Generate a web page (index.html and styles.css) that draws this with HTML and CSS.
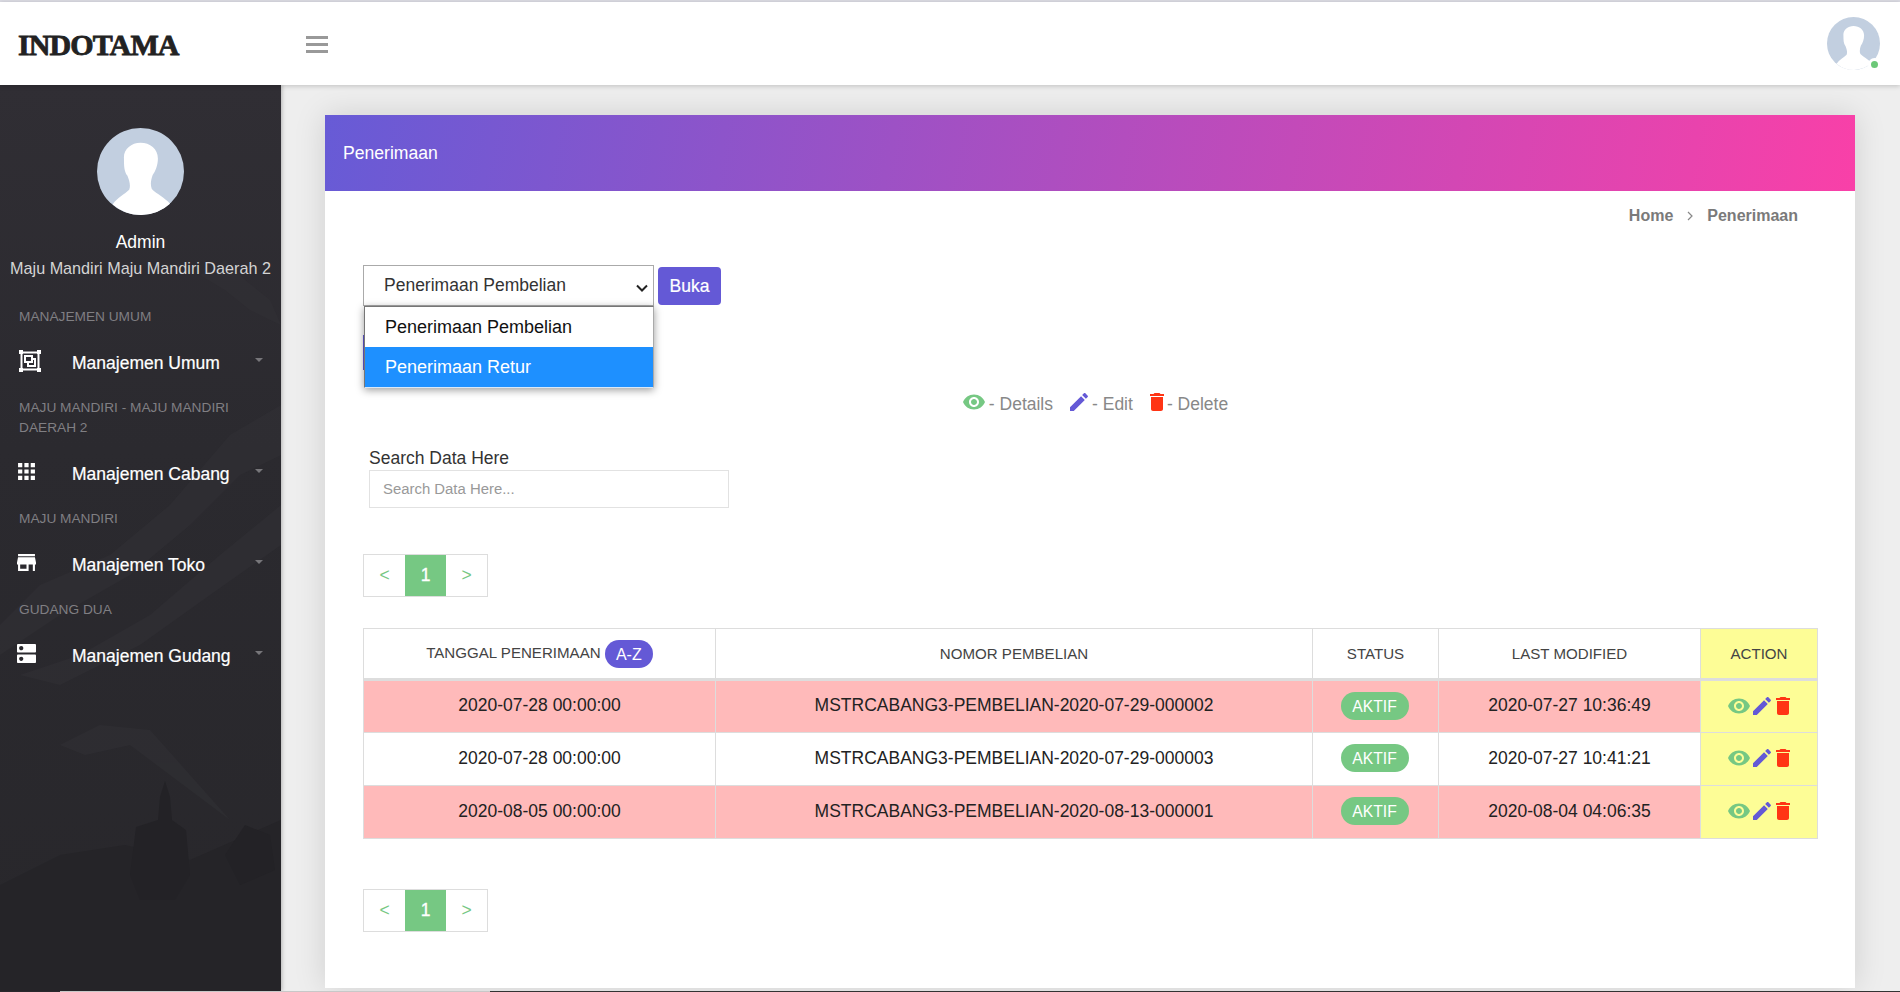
FILE: index.html
```html
<!DOCTYPE html>
<html lang="en">
<head>
    <meta charset="UTF-8">
    <meta name="viewport" content="width=device-width, initial-scale=1.0">
    <title>Penerimaan - Indotama</title>
    <link rel="stylesheet" href="styles.css">
</head>
<body>
    <svg class="icon-defs" width="0" height="0">
        <defs>
            <symbol id="i-eye" viewBox="0 0 24 24"><path d="M12 4.5C7 4.5 2.73 7.61 1 12c1.73 4.39 6 7.5 11 7.5s9.27-3.11 11-7.5c-1.73-4.39-6-7.5-11-7.5zM12 17c-2.76 0-5-2.24-5-5s2.24-5 5-5 5 2.24 5 5-2.24 5-5 5zm0-8c-1.66 0-3 1.34-3 3s1.34 3 3 3 3-1.34 3-3-1.34-3-3-3z"/></symbol>
            <symbol id="i-edit" viewBox="0 0 24 24"><path d="M3 17.25V21h3.75L17.81 9.94l-3.75-3.75L3 17.25zM20.71 7.04c.39-.39.39-1.02 0-1.41l-2.34-2.34c-.39-.39-1.02-.39-1.41 0l-1.83 1.83 3.75 3.75 1.83-1.83z"/></symbol>
            <symbol id="i-trash" viewBox="0 0 24 24"><path d="M6 19c0 1.1.9 2 2 2h8c1.1 0 2-.9 2-2V7H6v12zM19 4h-3.5l-1-1h-5l-1 1H5v2h14V4z"/></symbol>
            <symbol id="i-person" viewBox="0 0 100 100"><circle cx="50" cy="50" r="50" fill="#c2cfe0"/><path fill="#fff" d="M50 17C61 17 70 24 70 35C70 43 67 50 64 54C62 60 61 65 63 70C69 76 78 80 84 87A50 50 0 0 1 18 88C23 80 32 76 37 71C39 66 37 60 35 55C31 50 31 43 31 35C30 25 39 17 50 17Z"/></symbol>
        </defs>
    </svg>

    <div class="top-strip"></div>
    <header class="topbar">
        <div class="brand">INDOTAMA</div>
        <div class="burger"><span></span><span></span><span></span></div>
        <div class="top-avatar">
            <svg class="top-avatar-img"><use href="#i-person"/></svg>
            <span class="online-dot"></span>
        </div>
    </header>

    <div class="layout">
        <aside class="sidebar">
            <!-- faint mountain picture behind the menu -->
            <svg class="side-bg" viewBox="0 0 281 906" preserveAspectRatio="none">
                <g fill="#323136" opacity=".5">
                    <path d="M281 320L230 350L170 420L110 470L40 500L0 540V570L60 530L130 490L190 440L240 390L281 370Z"/>
                    <path d="M281 420L220 470L150 530L80 570L20 590L60 600L140 560L210 510L281 460Z"/>
                    <path d="M200 190L225 175L245 195L270 215L281 240L250 225L225 205Z"/>
                    <path d="M60 660L100 640L150 645L190 690L230 735L170 690L130 660L85 670Z"/>
                </g>
                <path fill="#252428" d="M0 800L60 770L125 760L190 775L281 735V906H0Z"/>
                <path fill="#232226" d="M130 790L136 742L158 735L160 712L165 696L170 712L172 735L186 745L190 790L175 815L140 815Z"/>
                <path fill="#232226" d="M225 770L245 740L270 750L275 785L240 800Z"/>
            </svg>
            <div class="profile">
                <svg class="profile-img"><use href="#i-person"/></svg>
                <div class="profile-name">Admin</div>
                <div class="profile-place">Maju Mandiri Maju Mandiri Daerah 2</div>
            </div>
            <div class="side-label first">MANAJEMEN UMUM</div>
            <a class="side-item">
                <svg class="side-icon side-icon-lg" viewBox="0 0 22 22" fill="none" stroke="#fff" stroke-width="2"><path d="M3 2.500h16M3 19.500h16M2.500 3v16M19.500 3v16"/><path d="M6 6h7v6H6z"/><path d="M9 12v4h7V9h-3"/><path fill="#fff" stroke="none" d="M0 0h4v4H0zM18 0h4v4h-4zM0 18h4v4H0zM18 18h4v4h-4z"/></svg>
                <span class="side-text">Manajemen Umum</span>
                <span class="caret"></span>
            </a>
            <div class="side-label">MAJU MANDIRI - MAJU MANDIRI DAERAH 2</div>
            <a class="side-item">
                <svg class="side-icon" viewBox="3 3 18 18" fill="#fff"><path d="M4 8h4V4H4v4zm6 12h4v-4h-4v4zm-6 0h4v-4H4v4zm0-6h4v-4H4v4zm6 0h4v-4h-4v4zm6-10v4h4V4h-4zm-6 4h4V4h-4v4zm6 6h4v-4h-4v4zm0 6h4v-4h-4v4z"/></svg>
                <span class="side-text">Manajemen Cabang</span>
                <span class="caret"></span>
            </a>
            <div class="side-label">MAJU MANDIRI</div>
            <a class="side-item">
                <svg class="side-icon" viewBox="3 3 18 18" fill="#fff"><path d="M20 4H4v2h16V4zm1 10v-2l-1-5H4l-1 5v2h1v6h10v-6h4v6h2v-6h1zm-9 4H6v-4h6v4z"/></svg>
                <span class="side-text">Manajemen Toko</span>
                <span class="caret"></span>
            </a>
            <div class="side-label">GUDANG DUA</div>
            <a class="side-item">
                <svg class="side-icon" viewBox="3 3 18 18" fill="#fff"><path d="M20 13H4c-.55 0-1 .45-1 1v6c0 .55.45 1 1 1h16c.55 0 1-.45 1-1v-6c0-.55-.45-1-1-1zM7 19c-1.100 0-2-.9-2-2s.9-2 2-2 2 .9 2 2-.9 2-2 2zM20 3H4c-.55 0-1 .45-1 1v6c0 .55.45 1 1 1h16c.55 0 1-.45 1-1V4c0-.55-.45-1-1-1zM7 9c-1.100 0-2-.9-2-2s.9-2 2-2 2 .9 2 2-.9 2-2 2z"/></svg>
                <span class="side-text">Manajemen Gudang</span>
                <span class="caret"></span>
            </a>
        </aside>

        <main class="main">
            <section class="card">
                <div class="card-head">Penerimaan</div>
                <div class="card-body">
                    <div class="crumbs">
                        <span>Home</span>
                        <svg class="crumb-sep" viewBox="0 0 10 10" fill="none" stroke="#888" stroke-width="1.200"><path d="M3 1l4 4-4 4"/></svg>
                        <span>Penerimaan</span>
                    </div>

                    <div class="picker">
                        <select class="picker-select">
                            <option>Penerimaan Pembelian</option>
                            <option>Penerimaan Retur</option>
                        </select>
                        <button class="btn-open">Buka</button>
                        <div class="picker-menu">
                            <div class="picker-option">Penerimaan Pembelian</div>
                            <div class="picker-option active">Penerimaan Retur</div>
                        </div>
                    </div>

                    <div class="btn-under"></div>

                    <div class="legend">
                        <svg class="ic green key-eye"><use href="#i-eye"/></svg><span>- Details</span>
                        <svg class="ic purple key-edit"><use href="#i-edit"/></svg><span>- Edit</span>
                        <svg class="ic red key-trash"><use href="#i-trash"/></svg><span>- Delete</span>
                    </div>

                    <div class="search">
                        <label class="search-label" for="searchData">Search Data Here</label>
                        <input class="search-input" id="searchData" placeholder="Search Data Here...">
                    </div>

                    <div class="pager pager-top">
                        <span class="pager-cell">&lt;</span>
                        <span class="pager-cell active">1</span>
                        <span class="pager-cell">&gt;</span>
                    </div>

                    <table class="data-table">
                        <thead>
                            <tr>
                                <th class="col-date">TANGGAL PENERIMAAN <span class="sort-pill">A-Z</span></th>
                                <th class="col-num">NOMOR PEMBELIAN</th>
                                <th class="col-status">STATUS</th>
                                <th class="col-mod">LAST MODIFIED</th>
                                <th class="col-action">ACTION</th>
                            </tr>
                        </thead>
                        <tbody>
                            <tr class="row-pink">
                                <td>2020-07-28 00:00:00</td>
                                <td>MSTRCABANG3-PEMBELIAN-2020-07-29-000002</td>
                                <td><span class="status-pill">AKTIF</span></td>
                                <td>2020-07-27 10:36:49</td>
                                <td class="col-action"><div class="actions"><svg class="ic green"><use href="#i-eye"/></svg><svg class="ic purple"><use href="#i-edit"/></svg><svg class="ic red"><use href="#i-trash"/></svg></div></td>
                            </tr>
                            <tr>
                                <td>2020-07-28 00:00:00</td>
                                <td>MSTRCABANG3-PEMBELIAN-2020-07-29-000003</td>
                                <td><span class="status-pill">AKTIF</span></td>
                                <td>2020-07-27 10:41:21</td>
                                <td class="col-action"><div class="actions"><svg class="ic green"><use href="#i-eye"/></svg><svg class="ic purple"><use href="#i-edit"/></svg><svg class="ic red"><use href="#i-trash"/></svg></div></td>
                            </tr>
                            <tr class="row-pink">
                                <td>2020-08-05 00:00:00</td>
                                <td>MSTRCABANG3-PEMBELIAN-2020-08-13-000001</td>
                                <td><span class="status-pill">AKTIF</span></td>
                                <td>2020-08-04 04:06:35</td>
                                <td class="col-action"><div class="actions"><svg class="ic green"><use href="#i-eye"/></svg><svg class="ic purple"><use href="#i-edit"/></svg><svg class="ic red"><use href="#i-trash"/></svg></div></td>
                            </tr>
                        </tbody>
                    </table>

                    <div class="pager pager-bottom">
                        <span class="pager-cell">&lt;</span>
                        <span class="pager-cell active">1</span>
                        <span class="pager-cell">&gt;</span>
                    </div>
                </div>
            </section>
        </main>
    </div>
    <div class="bottom-strip"></div>
</body>
</html>
```
FILE: styles.css
```css
* {
    box-sizing: border-box;
}
html, body {
    height: 100%;
}
body {
    margin: 0;
    font-family: "Liberation Sans", Arial, sans-serif;
    font-size: 17.5px;
    color: #333;
    background: #eeeeee;
    display: flex;
    flex-direction: column;
    overflow: hidden;
}
.icon-defs {
    position: absolute;
}
.top-strip {
    height: 2px;
    background: #dcdce4;
}
.bottom-strip {
    height: 1px;
    position: relative;
    z-index: 4;
    background: linear-gradient(to right, #29282c 60px, #c8c8c8 60px, #c8c8c8 490px, #333 490px);
}
.topbar {
    height: 83px;
    background: white;
    display: flex;
    align-items: center;
    padding-left: 18px;
    padding-right: 20px;
    box-shadow: 0 1px 5px rgba(0,0,0,0.2);
    position: relative;
    z-index: 3;
}
.brand {
    width: 288px;
    padding-top: 2px;
    font-family: "Liberation Serif", serif;
    font-weight: bold;
    font-size: 30px;
    color: #222;
    -webkit-text-stroke: 0.8px #222;
    letter-spacing: -0.9px;
}
.burger {
    width: 22px;
    margin-top: 2px;
    display: flex;
    flex-direction: column;
    gap: 4px;
}
.burger span {
    height: 3px;
    background: #999;
}
.top-avatar {
    margin-left: auto;
    position: relative;
    width: 53px;
    height: 53px;
}
.top-avatar-img {
    width: 53px;
    height: 53px;
    display: block;
}
.online-dot {
    position: absolute;
    right: -1px;
    bottom: -1px;
    width: 13px;
    height: 13px;
    border-radius: 50%;
    background: #6cc878;
    border: 3px solid white;
}
.layout {
    flex: 1;
    display: flex;
    min-height: 0;
}
.sidebar {
    width: 281px;
    flex-shrink: 0;
    background-image: linear-gradient(#302e34, #2b2a2f 40%, #28272b);
    color: white;
    position: relative;
    box-shadow: 1px 0 4px rgba(0,0,0,0.25);
    z-index: 2;
    overflow: hidden;
}
.side-bg {
    position: absolute;
    left: 0;
    top: 0;
    width: 100%;
    height: 100%;
}
.profile, .side-label, .side-item {
    position: relative;
}
.profile {
    padding-top: 43px;
    text-align: center;
}
.profile-img {
    width: 87px;
    height: 87px;
    display: block;
    margin: 0 auto 14px;
}
.profile-name {
    line-height: 26px;
    color: #fff;
}
.profile-place {
    line-height: 27px;
    font-size: 16.200px;
    color: #d4d4d4;
    white-space: nowrap;
}
.side-label {
    margin-top: 17px;
    padding: 0 19px;
    font-size: 13.700px;
    line-height: 20px;
    color: #807f83;
}
.side-label.first {
    margin-top: 25px;
}
.side-item {
    display: flex;
    align-items: center;
    height: 36px;
    margin-top: 18px;
    padding-left: 17px;
    padding-right: 18px;
}
.side-icon {
    width: 19px;
    height: 19px;
    margin-top: -6px;
    flex-shrink: 0;
}
.side-icon-lg {
    width: 22px;
    height: 22px;
    margin-left: 2px;
    margin-right: -5px;
    margin-top: -5px;
}
.side-text {
    margin-left: 36px;
    font-size: 17.500px;
    -webkit-text-stroke: 0.2px #fff;
    white-space: nowrap;
}
.caret {
    margin-left: auto;
    margin-top: -6px;
    border-top: 4px solid #77767a;
    border-left: 4px solid transparent;
    border-right: 4px solid transparent;
}
.main {
    flex: 1;
    padding: 30px 45px 3px 44px;
    min-width: 0;
}
.card {
    height: 100%;
    background: white;
    box-shadow: 0 0 30px rgba(0,0,0,0.13);
}
.card-head {
    height: 76px;
    padding-left: 18px;
    padding-top: 1px;
    display: flex;
    align-items: center;
    color: white;
    font-size: 17.600px;
    background: linear-gradient(100deg, #675bd6, #f940a8);
}
.card-body {
    padding: 13px 38px 0;
}
.crumbs {
    height: 24px;
    display: flex;
    align-items: center;
    justify-content: flex-end;
    gap: 12px;
    padding-right: 19px;
    font-size: 16px;
    font-weight: bold;
    color: #7a7a7a;
}
.crumb-sep {
    width: 10px;
    height: 10px;
}
.picker {
    margin-top: 37px;
    position: relative;
    display: flex;
    align-items: center;
    gap: 4px;
    height: 41px;
}
.picker-select {
    appearance: none;
    width: 291px;
    height: 41px;
    padding-left: 20px;
    padding-bottom: 2px;
    font-family: inherit;
    font-size: 17.500px;
    color: #333;
    background: white url("data:image/svg+xml,%3Csvg xmlns='http://www.w3.org/2000/svg' width='12' height='8'%3E%3Cpath d='M1 1.500l5 5 5-5' fill='none' stroke='%23222' stroke-width='2'/%3E%3C/svg%3E") no-repeat right 5px top 18px;
    border: 1px solid #aaa;
    border-radius: 0;
}
.btn-open {
    width: 63px;
    height: 38px;
    padding-top: 2px;
    border: none;
    border-radius: 4px;
    background: #6459d6;
    color: white;
    font-family: inherit;
    font-size: 17.500px;
    -webkit-text-stroke: 0.2px #fff;
}
.picker-menu {
    position: absolute;
    left: 1px;
    top: 41px;
    width: 290px;
    background: white;
    border: 1px solid #767676;
    border-bottom: 1px solid #d8e8f8;
    border-right-color: #aaa;
    box-shadow: 0 2px 8px rgba(0,0,0,0.4);
    z-index: 5;
}
.picker-option {
    height: 40px;
    line-height: 41px;
    padding-left: 20px;
    font-size: 18px;
    color: #111;
}
.picker-option.active {
    background: #1e90ff;
    color: white;
}
.btn-under {
    width: 120px;
    height: 35px;
    margin-top: 29px;
    background: #6459d6;
}
.legend {
    height: 30px;
    margin-top: 19px;
    padding-left: 10px;
    display: flex;
    align-items: center;
    justify-content: center;
    color: #888;
}
.legend .ic {
    margin-top: -5px;
}
.legend .key-eye {
    margin-right: 3px;
}
.legend .key-edit {
    margin-left: 14px;
    margin-right: 1px;
}
.legend .key-trash {
    margin-left: 12px;
    margin-right: -2px;
}
.ic {
    width: 24px;
    height: 24px;
    flex-shrink: 0;
}
.green { fill: #76c883; }
.purple { fill: #6459d6; }
.red { fill: #ff3414; }
.search {
    margin-top: 27px;
    padding-left: 6px;
}
.search-label {
    display: block;
    line-height: 24px;
    color: #333;
}
.search-input {
    display: block;
    width: 360px;
    height: 38px;
    margin-top: 0;
    padding: 0 13px;
    border: 1px solid #e2e2e2;
    font-family: inherit;
    font-size: 14.900px;
    outline: none;
}
.search-input::placeholder {
    color: #999;
}
.pager {
    display: flex;
    width: 125px;
    height: 43px;
    border: 1px solid #ddd;
}
.pager-top {
    margin-top: 46px;
}
.pager-bottom {
    margin-top: 50px;
}
.pager-cell {
    flex: 1;
    display: flex;
    align-items: center;
    justify-content: center;
    color: #76c883;
    font-size: 17.500px;
}
.pager-cell.active {
    background: #76c883;
    color: white;
    -webkit-text-stroke: 0.3px #fff;
}
.data-table {
    width: 100%;
    margin-top: 31px;
    border-collapse: collapse;
    table-layout: fixed;
}
.data-table th, .data-table td {
    border: 1px solid #ddd;
    text-align: center;
    padding: 0;
}
.data-table th {
    height: 51px;
    font-size: 15.100px;
    font-weight: normal;
    color: #444;
    border-bottom-width: 3px;
}
.data-table td {
    height: 53px;
    padding-bottom: 2px;
    color: #222;
}
.row-pink td {
    background: #ffbaba;
}
.data-table .col-action {
    background: #fdfd96;
}
.col-date { width: 352px; }
.col-num { width: 597px; }
.col-status { width: 126px; }
.col-mod { width: 262px; }
.col-action { width: 117px; }
.sort-pill {
    display: inline-block;
    width: 48px;
    height: 28px;
    line-height: 29px;
    border-radius: 14px;
    background: #6459d6;
    color: white;
    font-size: 16px;
    vertical-align: middle;
}
.status-pill {
    display: inline-block;
    width: 68px;
    height: 28px;
    line-height: 30px;
    margin-right: 2px;
    border-radius: 14px;
    background: #76c883;
    color: white;
    font-size: 15.700px;
}
.actions {
    display: flex;
    justify-content: center;
    padding-left: 4px;
}
.actions .purple {
    margin-left: -1px;
}
.actions .red {
    margin-left: -3px;
}
```
